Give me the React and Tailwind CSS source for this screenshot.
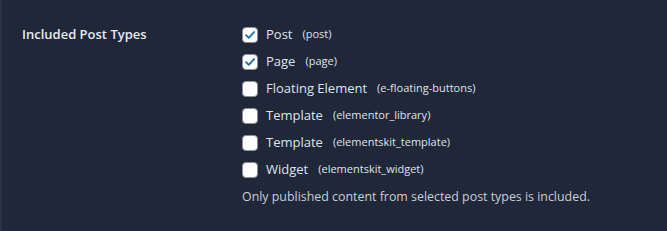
import React from 'react';

const types = [
  { label: 'Post', slug: 'post', checked: true },
  { label: 'Page', slug: 'page', checked: true },
  { label: 'Floating Element', slug: 'e-floating-buttons', checked: false },
  { label: 'Template', slug: 'elementor_library', checked: false },
  { label: 'Template', slug: 'elementskit_template', checked: false },
  { label: 'Widget', slug: 'elementskit_widget', checked: false },
];

const Box = ({ checked }) => (
  <span className="w-4 h-4 rounded-[4px] bg-white border border-[#8c8f94] flex items-center justify-center shrink-0">
    {checked && (
      <svg viewBox="0 0 16 16" className="w-[14px] h-[14px]">
        <path d="M3.5 8.2 L6.6 11.2 L12.6 4.6" fill="none" stroke="#2271b1" strokeWidth="2.2" strokeLinecap="round" strokeLinejoin="round" />
      </svg>
    )}
  </span>
);

export default function App() {
  return (
    <div
      className="w-[667px] h-[231px] bg-[#1f2739] border-l-2 border-[#2b3446] flex pt-[21px]"
      style={{ fontFamily: '"Open Sans", "Noto Sans", sans-serif' }}
    >
      <div className="w-[240px] shrink-0 pl-[20px] text-[13px] font-semibold text-[#e8eaef] leading-[27px]">
        Included Post Types
      </div>
      <div className="flex flex-col">
        {types.map((t, i) => (
          <label key={i} className="h-[27px] flex items-center gap-2">
            <Box checked={t.checked} />
            <span className="text-[13px] text-[#dfe3ea]">{t.label}</span>
            <span className="ml-[2px] text-[11px] text-[#dfe3ea]">({t.slug})</span>
          </label>
        ))}
        <p className="mt-[4px] text-[12.4px] text-[#c9ced8] leading-[20px] whitespace-nowrap">
          Only published content from selected post types is included.
        </p>
      </div>
    </div>
  );
}
